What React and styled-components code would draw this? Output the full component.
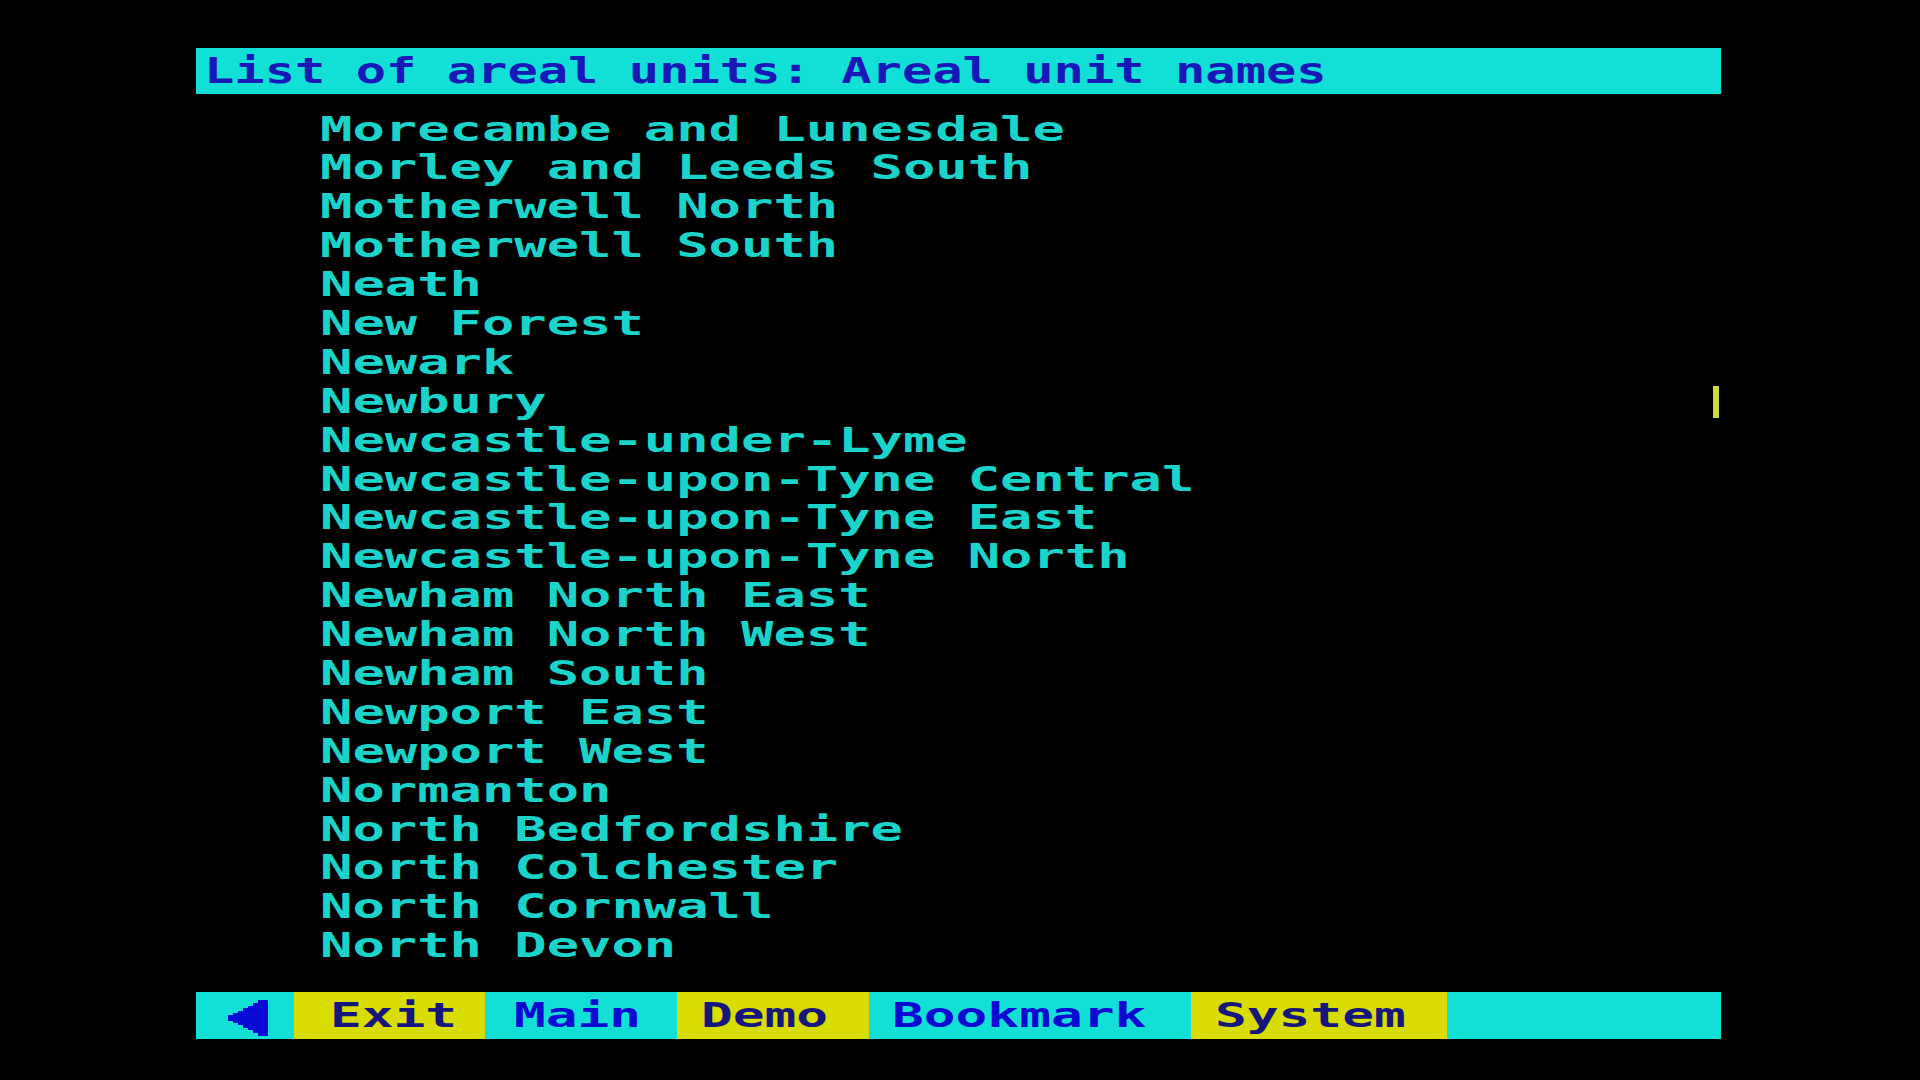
import React from "react";
import styled, { createGlobalStyle } from "styled-components";

const Global = createGlobalStyle`
  html, body { margin: 0; padding: 0; background: #000; }
  body { width: 1920px; height: 1080px; overflow: hidden; }
`;

const Screen = styled.div`
  position: relative;
  width: 1525px;
  margin-left: 196px;
  padding-top: 48px;
  font-family: "DejaVu Sans Mono", "Liberation Mono", monospace;
  font-weight: bold;
`;

const Header = styled.div`
  height: 46px;
  background: #12dfd6;
  padding-left: 8px;
  line-height: 46px;
  font-size: 35px;
  color: #1818b8;
  white-space: pre;
  overflow: hidden;
`;

const Stretch = styled.span`
  display: inline-block;
  transform: scaleX(${(p) => p.$sx});
  transform-origin: left center;
  white-space: pre;
`;

const List = styled.ul`
  list-style: none;
  margin: 0;
  padding: 16.5px 0 0 124px;
`;

const Row = styled.li`
  height: 38.9px;
  line-height: 38.9px;
  font-size: 33px;
  color: #1ad3cb;
  white-space: pre;
`;

const Bar = styled.div`
  display: flex;
  margin-top: 26px;
  height: 47px;
  background: #12dfd6;
`;

const Seg = styled.div`
  flex: 0 0 ${(p) => p.$w}px;
  height: 47px;
  box-sizing: border-box;
  padding-left: ${(p) => p.$pad}px;
  background: ${(p) => (p.$yellow ? "#d9dc00" : "#12dfd6")};
  color: ${(p) => (p.$yellow ? "#16167c" : "#0a0ad2")};
  font-size: 33px;
  line-height: 47px;
  white-space: pre;
  display: flex;
  align-items: flex-start;
`;

const ArrowSeg = styled.div`
  flex: 0 0 98px;
  height: 47px;
  box-sizing: border-box;
  padding: 8px 0 0 32px;
`;

const Cursor = styled.div`
  position: absolute;
  left: 1517px;
  top: 386px;
  width: 6px;
  height: 32px;
  background: #cfdc34;
`;

const names = [
  "Morecambe and Lunesdale",
  "Morley and Leeds South",
  "Motherwell North",
  "Motherwell South",
  "Neath",
  "New Forest",
  "Newark",
  "Newbury",
  "Newcastle-under-Lyme",
  "Newcastle-upon-Tyne Central",
  "Newcastle-upon-Tyne East",
  "Newcastle-upon-Tyne North",
  "Newham North East",
  "Newham North West",
  "Newham South",
  "Newport East",
  "Newport West",
  "Normanton",
  "North Bedfordshire",
  "North Colchester",
  "North Cornwall",
  "North Devon",
];

const segs = [
  { label: "Exit", w: 191, pad: 36, yellow: true },
  { label: "Main", w: 192, pad: 29, yellow: false },
  { label: "Demo", w: 192, pad: 24, yellow: true },
  { label: "Bookmark", w: 322, pad: 23, yellow: false },
  { label: "System", w: 256, pad: 24, yellow: true },
];

function BackArrow() {
  const cols = [
    [0, 15, 6],
    [5, 13, 10],
    [10, 11, 14],
    [15, 8, 20],
    [20, 6, 24],
    [25, 3, 30],
    [30, 0, 36],
  ];
  return (
    <svg width="40" height="36" viewBox="0 0 40 36">
      {cols.map(([x, y, h]) => (
        <rect key={x} x={x} y={y} width={x === 30 ? 10 : 5.5} height={h} fill="#0a0ad8" />
      ))}
    </svg>
  );
}

export default function App() {
  return (
    <>
      <Global />
      <Screen>
        <Header>
          <Stretch $sx={1.44}>List of areal units: Areal unit names</Stretch>
        </Header>
        <List>
          {names.map((n) => (
            <Row key={n}>
              <Stretch $sx={1.63}>{n}</Stretch>
            </Row>
          ))}
        </List>
        <Bar>
          <ArrowSeg>
            <BackArrow />
          </ArrowSeg>
          {segs.map((s) => (
            <Seg key={s.label} $w={s.w} $pad={s.pad} $yellow={s.yellow}>
              <Stretch $sx={1.6}>{s.label}</Stretch>
            </Seg>
          ))}
        </Bar>
        <Cursor />
      </Screen>
    </>
  );
}
